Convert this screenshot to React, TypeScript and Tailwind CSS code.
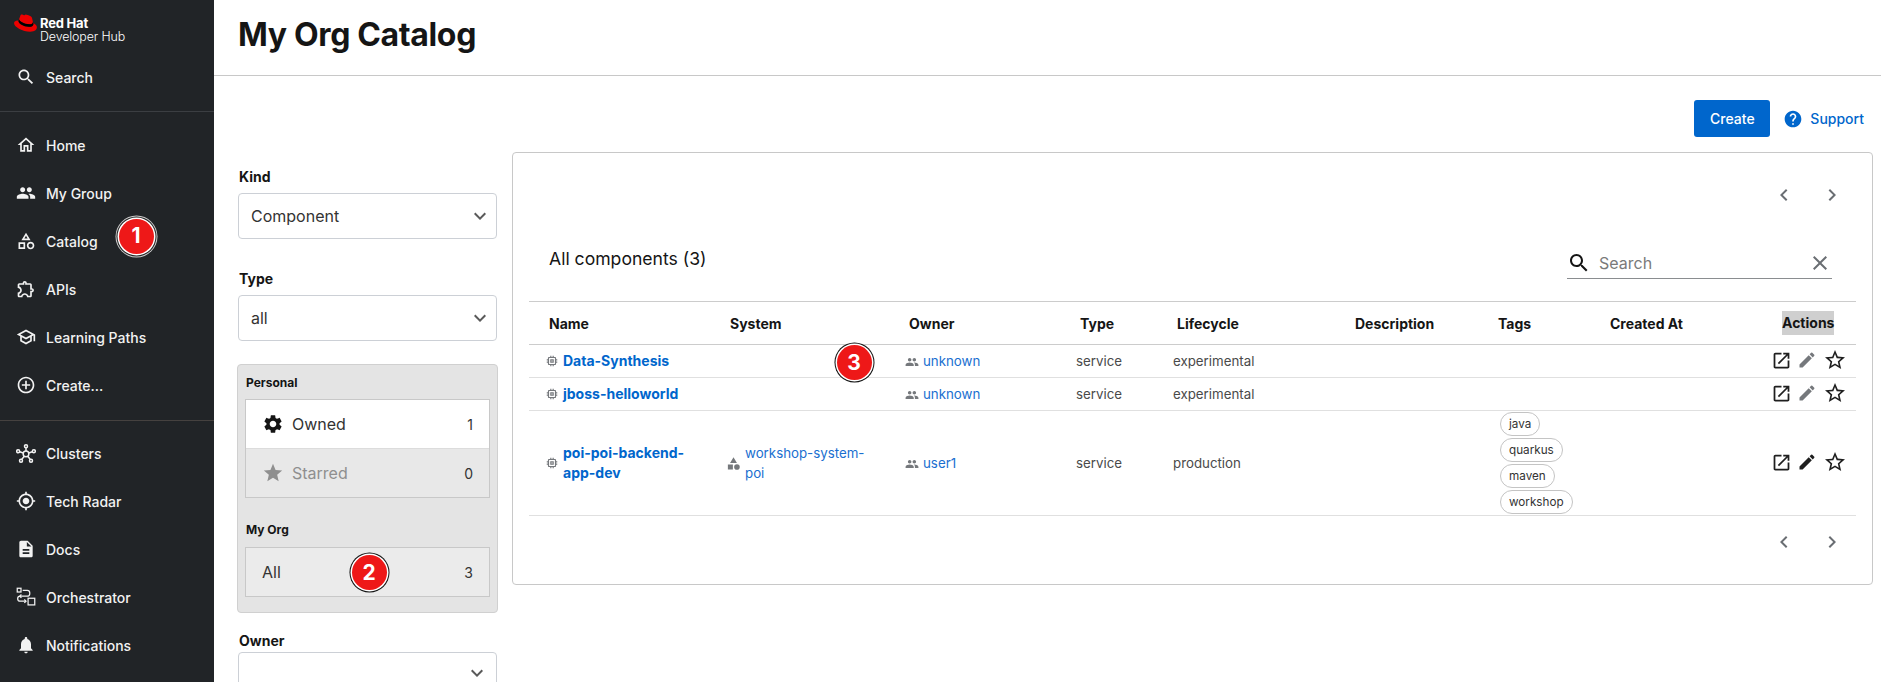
import React from "react";

const P = {
  search: "M15.5 14h-.79l-.28-.27C15.41 12.59 16 11.11 16 9.5 16 5.91 13.09 3 9.5 3S3 5.91 3 9.5 5.91 16 9.5 16c1.61 0 3.09-.59 4.23-1.57l.27.28v.79l5 4.99L20.49 19l-4.99-5zm-6 0C7.01 14 5 11.99 5 9.5S7.01 5 9.5 5 14 7.01 14 9.5 11.99 14 9.5 14z",
  home: "m12 5.69 5 4.5V18h-2v-6H9v6H7v-7.81l5-4.5M12 3 2 12h3v8h6v-6h2v6h6v-8h3L12 3z",
  people: "M16 11c1.66 0 2.99-1.34 2.99-3S17.66 5 16 5c-1.66 0-3 1.34-3 3s1.34 3 3 3zm-8 0c1.66 0 2.99-1.34 2.99-3S9.66 5 8 5C6.34 5 5 6.34 5 8s1.34 3 3 3zm0 2c-2.33 0-7 1.17-7 3.5V19h14v-2.5c0-2.33-4.67-3.5-7-3.5zm8 0c-.29 0-.62.02-.97.05 1.16.84 1.97 1.97 1.97 3.45V19h6v-2.5c0-2.33-4.67-3.5-7-3.5z",
  category: "m12 2-5.5 9h11L12 2zm0 3.84L13.93 9h-3.87L12 5.84zM17.5 13c-2.49 0-4.5 2.01-4.5 4.5s2.01 4.5 4.5 4.5 4.5-2.01 4.5-4.5-2.01-4.5-4.5-4.5zm0 7c-1.38 0-2.5-1.12-2.5-2.5s1.12-2.5 2.5-2.5 2.5 1.12 2.5 2.5-1.12 2.5-2.5 2.5zM3 21.5h8v-8H3v8zm2-6h4v4H5v-4z",
  categoryFilled: "M12 2l-5.5 9h11zM17.5 13a4.5 4.5 0 1 0 0 9 4.5 4.5 0 0 0 0-9zM3 13.5h8v8H3z",
  ext: "M10.5 4.5c.28 0 .5.22.5.5v2h6v6h2c.28 0 .5.22.5.5s-.22.5-.5.5h-2v6h-2.12c-.68-1.75-2.39-3-4.38-3s-3.7 1.25-4.38 3H4v-2.12c1.75-.68 3-2.39 3-4.38 0-1.99-1.24-3.7-2.99-4.38L4 7h6V5c0-.28.22-.5.5-.5m0-2C9.12 2.5 8 3.62 8 5H4c-1.1 0-1.99.9-1.99 2v3.8h.29c1.49 0 2.7 1.21 2.7 2.7s-1.21 2.7-2.7 2.7H2V20c0 1.1.9 2 2 2h3.8v-.3c0-1.49 1.21-2.7 2.7-2.7s2.7 1.21 2.7 2.7v.3H17c1.1 0 2-.9 2-2v-4c1.38 0 2.5-1.12 2.5-2.5S20.38 11 19 11V7c0-1.1-.9-2-2-2h-4c0-1.38-1.12-2.5-2.5-2.5z",
  school: "M12 3 1 9l4 2.18v6L12 21l7-3.82v-6l2-1.09V17h2V9L12 3zm6.82 6L12 12.72 5.18 9 12 5.28 18.82 9zM17 15.99l-5 2.73-5-2.73v-3.72L12 15l5-2.73v3.72z",
  add: "M13 7h-2v4H7v2h4v4h2v-4h4v-2h-4V7zm-1-5C6.49 2 2 6.49 2 12s4.49 10 10 10 10-4.49 10-10S17.51 2 12 2zm0 18c-4.41 0-8-3.59-8-8s3.59-8 8-8 8 3.59 8 8-3.59 8-8 8z",
  gps: "M12 8c-2.21 0-4 1.79-4 4s1.79 4 4 4 4-1.79 4-4-1.79-4-4-4zm8.94 3c-.46-4.17-3.77-7.48-7.94-7.94V1h-2v2.06C6.83 3.52 3.52 6.83 3.06 11H1v2h2.06c.46 4.17 3.77 7.48 7.94 7.94V23h2v-2.06c4.17-.46 7.48-3.77 7.94-7.94H23v-2h-2.06zM12 19c-3.87 0-7-3.13-7-7s3.13-7 7-7 7 3.13 7 7-3.13 7-7 7z",
  doc: "M14 2H6c-1.1 0-1.99.9-1.99 2L4 20c0 1.1.89 2 1.99 2H18c1.1 0 2-.9 2-2V8l-6-6zm2 16H8v-2h8v2zm0-4H8v-2h8v2zm-3-5V3.5L18.5 9H13z",
  bell: "M12 22c1.1 0 2-.9 2-2h-4c0 1.1.89 2 2 2zm6-6v-5c0-3.07-1.64-5.64-4.5-6.32V4c0-.83-.67-1.5-1.5-1.5s-1.5.67-1.5 1.5v.68C7.63 5.36 6 7.92 6 11v5l-2 2v1h16v-1l-2-2z",
  gear: "M19.14 12.94c.04-.3.06-.61.06-.94 0-.32-.02-.64-.07-.94l2.03-1.58c.18-.14.23-.41.12-.61l-1.92-3.32c-.12-.22-.37-.29-.59-.22l-2.39.96c-.5-.38-1.03-.7-1.62-.94l-.36-2.54c-.04-.24-.24-.41-.48-.41h-3.84c-.24 0-.43.17-.47.41l-.36 2.54c-.59.24-1.13.57-1.62.94l-2.39-.96c-.22-.08-.47 0-.59.22L2.74 8.87c-.12.21-.08.47.12.61l2.03 1.58c-.05.3-.09.63-.09.94s.02.64.07.94l-2.03 1.58c-.18.14-.23.41-.12.61l1.92 3.32c.12.22.37.29.59.22l2.39-.96c.5.38 1.03.7 1.62.94l.36 2.54c.05.24.24.41.48.41h3.84c.24 0 .44-.17.47-.41l.36-2.54c.59-.24 1.13-.56 1.62-.94l2.39.96c.22.08.47 0 .59-.22l1.92-3.32c.12-.22.07-.47-.12-.61l-2.01-1.58zM12 15.6c-1.98 0-3.6-1.62-3.6-3.6s1.62-3.6 3.6-3.6 3.6 1.62 3.6 3.6-1.62 3.6-3.6 3.6z",
  star: "M12 17.27 18.18 21l-1.64-7.03L22 9.24l-7.19-.61L12 2 9.19 8.63 2 9.24l5.46 4.73L5.82 21z",
  starO: "M22 9.24l-7.19-.62L12 2 9.19 8.63 2 9.24l5.46 4.73L5.82 21 12 17.27 18.18 21l-1.63-7.03L22 9.24zM12 15.4l-3.76 2.27 1-4.28-3.32-2.88 4.38-.38L12 6.1l1.71 4.04 4.38.38-3.32 2.88 1 4.28L12 15.4z",
  edit: "M3 17.25V21h3.75L17.81 9.94l-3.75-3.75L3 17.25zM20.71 7.04c.39-.39.39-1.02 0-1.41l-2.34-2.34a.9959.9959 0 0 0-1.41 0l-1.83 1.83 3.75 3.75 1.83-1.83z",
  open: "M19 19H5V5h7V3H5c-1.11 0-2 .9-2 2v14c0 1.1.89 2 2 2h14c1.1 0 2-.9 2-2v-7h-2v7zM14 3v2h3.59l-9.83 9.83 1.41 1.41L19 6.41V10h2V3h-7z",
  help: "M12 2C6.48 2 2 6.48 2 12s4.48 10 10 10 10-4.48 10-10S17.52 2 12 2zm1 17h-2v-2h2v2zm2.07-7.75-.9.92C13.45 12.9 13 13.5 13 15h-2v-.5c0-1.1.45-2.1 1.17-2.83l1.24-1.26c.37-.36.59-.86.59-1.41 0-1.1-.9-2-2-2s-2 .9-2 2H8c0-2.21 1.79-4 4-4s4 1.79 4 4c0 .88-.36 1.68-.93 2.25z",
  close: "M19 6.41 17.59 5 12 10.59 6.41 5 5 6.41 10.59 12 5 17.59 6.41 19 12 13.41 17.59 19 19 17.59 13.41 12z",
  memory: "M15 9H9v6h6V9zm-2 4h-2v-2h2v2zm8-2V9h-2V7c0-1.1-.9-2-2-2h-2V3h-2v2h-2V3H9v2H7c-1.1 0-2 .9-2 2v2H3v2h2v2H3v2h2v2c0 1.1.9 2 2 2h2v2h2v-2h2v2h2v-2h2c1.1 0 2-.9 2-2v-2h2v-2h-2v-2h2zm-4 6H7V7h10v10z",
  left: "M15.41 7.41 14 6l-6 6 6 6 1.41-1.41L10.83 12z",
  right: "M10 6 8.59 7.41 13.17 12l-4.58 4.59L10 18l6-6z",
  down: "M16.59 8.59 12 13.17 7.41 8.59 6 10l6 6 6-6z",
};

function I({ d, className }: { d: string; className: string }) {
  return (
    <svg viewBox="0 0 24 24" fill="currentColor" className={className}>
      <path d={d} />
    </svg>
  );
}

function Hub() {
  return (
    <svg viewBox="0 0 24 24" fill="none" stroke="currentColor" strokeWidth="1.8" className="w-[21px] h-[21px]">
      <circle cx="12" cy="12.5" r="3.4" />
      <circle cx="12" cy="3.2" r="1.8" />
      <circle cx="2.6" cy="9.4" r="1.8" />
      <circle cx="21.4" cy="9.4" r="1.8" />
      <circle cx="6" cy="20.6" r="1.8" />
      <circle cx="18" cy="20.6" r="1.8" />
      <path d="M12 5v4.1M4.4 10l4.4 1.5M19.6 10l-4.4 1.5M7 19l3-3.6M17 19l-3-3.6" />
    </svg>
  );
}

function Orchestrator() {
  return (
    <svg viewBox="0 0 24 24" fill="none" stroke="currentColor" strokeWidth="1.5" className="w-[20px] h-[20px]">
      <rect x="1.5" y="1.5" width="4.5" height="4.5" />
      <rect x="14.5" y="13.5" width="8" height="8" />
      <path d="M8 4h5.5a3 3 0 0 1 3 3v1a3 3 0 0 1-3 3H5a3 3 0 0 0-3 3v0a3 3 0 0 0 3 3h7" />
      <path d="M6.5 9l-2 2 2 2M10 15l2 2-2 2" />
    </svg>
  );
}

function Logo() {
  return (
    <svg viewBox="0 0 192 145" className="w-[23px] h-[18px] shrink-0">
      <path fill="#e00" d="M127.47,83.49c12.51,0,30.61-2.58,30.61-17.46a14,14,0,0,0-.31-3.42l-7.45-32.36c-1.72-7.12-3.23-10.35-15.73-16.6C124.89,8.69,103.76.5,97.51.5,91.69.5,90,8,83.06,8c-6.68,0-11.64-5.6-17.89-5.6-6,0-9.91,4.09-12.93,12.5,0,0-8.41,23.72-9.49,27.16A6.43,6.43,0,0,0,42.53,44c0,9.22,36.3,39.45,84.94,39.45M160,72.07c1.73,8.19,1.73,9.05,1.73,10.13,0,14-15.74,21.77-36.43,21.77C78.54,104,37.58,76.6,37.58,58.49a18.45,18.45,0,0,1,1.51-7.33C22.27,52,.5,55,.5,74.22c0,31.48,74.59,70.28,133.65,70.28,45.28,0,56.7-20.48,56.7-36.65,0-12.72-11-27.16-30.83-35.78" />
      <path fill="#000" d="M160,72.07c1.73,8.19,1.73,9.05,1.73,10.13,0,14-15.74,21.77-36.43,21.77C78.54,104,37.58,76.6,37.58,58.49a18.45,18.45,0,0,1,1.51-7.33l3.66-9.06A6.43,6.43,0,0,0,42.53,44c0,9.22,36.3,39.45,84.94,39.45,12.51,0,30.61-2.58,30.61-17.46a14,14,0,0,0-.31-3.42Z" />
    </svg>
  );
}

function Badge({ n, className }: { n: string; className: string }) {
  return (
    <div className={"absolute rounded-full bg-[#ee1818] text-white font-bold text-[21px] flex items-center justify-center w-[35px] h-[35px] " + className}>
      {n}
    </div>
  );
}

function NavItem({ icon, label, children }: { icon: React.ReactNode; label: string; children?: React.ReactNode }) {
  return (
    <div className="relative h-[48px] flex items-center pl-[16px] text-[#f2f2f2]">
      <div className="w-[20px] h-[24px] flex items-center justify-center mr-[10px]">{icon}</div>
      <span className="text-[14px] font-medium">{label}</span>
      {children}
    </div>
  );
}

const nav = "w-[20px] h-[20px]";

function FilterSelect({ label, value, className, boxClass, labelClass }: { label: string; value?: string; className: string; boxClass?: string; labelClass?: string }) {
  return (
    <div className={className}>
      <div className={"text-[14px] font-bold text-[#151515] leading-[17px] pl-[1px] " + (labelClass ?? "mb-[8px]")}>{label}</div>
      <div className={"border border-[#ccd0d6] rounded-[4px] flex items-center justify-between pl-[12px] bg-white " + (boxClass ?? "h-[46px] pr-[4px]")}>
        <span className="text-[16px] text-[#333]">{value}</span>
        <I d={P.down} className="w-[24px] h-[24px] text-[#5a5a5a]" />
      </div>
    </div>
  );
}

function Pager({ className }: { className: string }) {
  return (
    <div className={"flex justify-end gap-[24px] pr-[12px] text-[#6a6e73] " + className}>
      <I d={P.left} className="w-[24px] h-[24px]" />
      <I d={P.right} className="w-[24px] h-[24px]" />
    </div>
  );
}

const th = "text-left font-bold text-[14px] text-[#151515] pl-[20px] border-b border-[#cccccc]";
const td = "text-[13.3px] text-[#4a4a4a] pl-[16px] border-b border-[#e0e0e0]";
const link = "text-[#1a6fd0]";
const nameLink = "text-[#0066cc] font-bold text-[14px]";

function Actions({ editOff }: { editOff?: boolean }) {
  return (
    <div className="flex items-center -ml-[7px] mb-[2px]">
      <I d={P.open} className="w-[21px] h-[21px] text-[#1f1f1f]" />
      <I d={P.edit} className={"w-[20px] h-[20px] ml-[5px] " + (editOff ? "text-[#75787c]" : "text-[#1f1f1f]")} />
      <I d={P.starO} className="w-[24px] h-[24px] text-[#1f1f1f] ml-[6px]" />
    </div>
  );
}

function Row({ name, system, owner, type, life, tags, h, editOff, children }: { name: React.ReactNode; system?: React.ReactNode; owner: string; type: string; life: string; tags?: string[]; h: string; editOff?: boolean; children?: React.ReactNode }) {
  return (
    <tr className={h}>
      <td className={td}>
        <div className="flex items-center gap-[4px]">
          <I d={P.memory} className="w-[14px] h-[14px] text-[#75787c] shrink-0" />
          <span className={nameLink + " leading-[20px]"}>{name}</span>
        </div>
      </td>
      <td className={td}>
        <div className="relative">
          {system && (
            <div className="flex items-center gap-[4px]">
              <I d={P.categoryFilled} className="w-[15px] h-[15px] text-[#75787c] shrink-0" />
              <span className={link + " leading-[20px] w-[125px]"}>{system}</span>
            </div>
          )}
          {children}
        </div>
      </td>
      <td className={td + " pt-[2px]"}>
        <div className="flex items-center gap-[4px]">
          <I d={P.people} className="w-[14px] h-[14px] text-[#75787c]" />
          <span className={link}>{owner}</span>
        </div>
      </td>
      <td className={td + " pt-[2px]"}>{type}</td>
      <td className={td + " pt-[2px]"}>{life}</td>
      <td className={td}></td>
      <td className={td + " pl-[22px]"}>
        {tags && (
          <div className="flex flex-col items-start gap-[2px]">
            {tags.map((t) => (
              <span key={t} className="h-[24px] leading-[22px] border border-[#c4c4c4] rounded-full px-[8px] text-[11.7px] text-[#333]">{t}</span>
            ))}
          </div>
        )}
      </td>
      <td className={td}></td>
      <td className={td}><Actions editOff={editOff} /></td>
    </tr>
  );
}

export default function App() {
  return (
    <div className="flex h-[682px] overflow-hidden bg-white font-[Inter,sans-serif]">
      <aside className="w-[214px] shrink-0 bg-[#212427] text-white">
        <div className="h-[53px] pt-[14px] pl-[14px] flex items-start gap-[3px]">
          <Logo />
          <div className="text-[12.4px] leading-[13px] pt-[3px] text-white">
            <div className="font-bold text-[13px] tracking-[-0.2px]">Red Hat</div>
            <div className="font-light tracking-[-0.1px]">Developer Hub</div>
          </div>
        </div>
        <NavItem icon={<I d={P.search} className={nav} />} label="Search" />
        <div className="mt-[10px] h-px bg-[#3b3e42]" />
        <div className="mt-[9px]">
          <NavItem icon={<I d={P.home} className={nav} />} label="Home" />
          <NavItem icon={<I d={P.people} className={nav} />} label="My Group" />
          <NavItem icon={<I d={P.category} className={nav} />} label="Catalog">
            <Badge n="1" className="left-[118.5px] top-[1.5px] shadow-[0_0_0_1.5px_#ffffff,0_0_0_2.5px_#222222,0_0_0_3.5px_#cccccc]" />
          </NavItem>
          <NavItem icon={<I d={P.ext} className={nav} />} label="APIs" />
          <NavItem icon={<I d={P.school} className={nav} />} label="Learning Paths" />
          <NavItem icon={<I d={P.add} className={nav} />} label="Create..." />
        </div>
        <div className="mt-[11px] h-px bg-[#45413f]" />
        <div className="mt-[8px]">
          <NavItem icon={<Hub />} label="Clusters" />
          <NavItem icon={<I d={P.gps} className={nav} />} label="Tech Radar" />
          <NavItem icon={<I d={P.doc} className={nav} />} label="Docs" />
          <NavItem icon={<Orchestrator />} label="Orchestrator" />
          <NavItem icon={<I d={P.bell} className={nav} />} label="Notifications" />
        </div>
      </aside>

      <main className="flex-1 min-w-0">
        <header className="h-[76px] border-b border-[#c8c8c8] pl-[24px] flex items-center pb-[6px]">
          <h1 className="text-[32px] font-bold text-[#151515] tracking-[-0.35px]">My Org Catalog</h1>
        </header>

        <div className="pl-[24px] pr-[8px] pt-[24px]">
          <div className="flex justify-end items-center h-[37px] pr-[9px]">
            <div className="w-[76px] h-[37px] bg-[#0066cc] rounded-[3px] text-white text-[14px] font-medium flex items-center justify-center">Create</div>
            <div className="flex items-center ml-[13px] text-[#0066cc] text-[14px] font-medium">
              <I d={P.help} className="w-[20px] h-[20px] mr-[7px]" />
              <span>Support</span>
            </div>
          </div>

          <div className="flex mt-[15px]">
            <div className="w-[259px] shrink-0 mr-[15px]">
              <FilterSelect label="Kind" value="Component" className="pt-[16px]" />
              <FilterSelect label="Type" value="all" className="mt-[31px]" />
              <div className="mt-[23px] -ml-[1px] -mr-[1px] bg-[#e4e4e4] border border-[#d0d0d0] rounded-[4px] px-[7px] pt-[10px] pb-[15px]">
                <div className="text-[12px] font-bold text-[#151515] leading-[16px] pl-[1px] mb-[8px]">Personal</div>
                <div className="border border-[#c8c8c8]">
                  <div className="h-[48px] bg-white flex items-center pl-[16px] pr-[16px]">
                    <I d={P.gear} className="w-[22px] h-[22px] text-[#151515] mr-[8px]" />
                    <span className="flex-1 text-[16px] text-[#333]">Owned</span>
                    <span className="text-[14px] text-[#333]">1</span>
                  </div>
                  <div className="h-[49px] bg-[#e8e8e8] border-t border-[#dcdcdc] flex items-center pl-[16px] pr-[16px]">
                    <I d={P.star} className="w-[22px] h-[22px] text-[#8f8f8f] mr-[8px]" />
                    <span className="flex-1 text-[16px] text-[#8f8f8f]">Starred</span>
                    <span className="text-[14px] text-[#333]">0</span>
                  </div>
                </div>
                <div className="text-[12px] font-bold text-[#151515] leading-[16px] pl-[1px] mt-[24px] mb-[9px]">My Org</div>
                <div className="relative h-[50px] bg-[#ebebeb] border border-[#c8c8c8] flex items-center pl-[16px] pr-[16px]">
                  <span className="flex-1 text-[16px] text-[#333]">All</span>
                  <span className="text-[14px] text-[#333]">3</span>
                  <Badge n="2" className="left-[105.5px] top-[7px] shadow-[0_0_0_1.5px_#ffffff,0_0_0_2.5px_#111111]" />
                </div>
              </div>
              <FilterSelect label="Owner" className="mt-[19px]" labelClass="mb-[3px]" boxClass="h-[42px] pr-[7px]" />
            </div>

            <section className="flex-1 min-w-0 h-[433px] border border-[#c8c8c8] rounded-[4px] px-[16px] bg-white">
              <Pager className="mt-[30px]" />
              <div className="flex justify-between mt-[32px] h-[40px]">
                <h2 className="text-[17.6px] text-[#151515] pl-[20px] pt-[8px] leading-[24px]">All components (3)</h2>
                <div className="w-[265px] h-[40px] border-b border-[#8a8d90] flex items-center pt-[8px] mr-[24px] text-[#151515]">
                  <I d={P.search} className="w-[24px] h-[24px] shrink-0" />
                  <span className="flex-1 pl-[8px] text-[16px] text-[#7a7a7a]">Search</span>
                  <I d={P.close} className="w-[24px] h-[24px] text-[#6a6e73]" />
                </div>
              </div>
              <table className="table-fixed border-collapse w-[1327px] mt-[22px] border-t border-[#cccccc]">
                <colgroup>
                  <col className="w-[181px]" />
                  <col className="w-[179px]" />
                  <col className="w-[171px]" />
                  <col className="w-[97px]" />
                  <col className="w-[178px]" />
                  <col className="w-[143px]" />
                  <col className="w-[112px]" />
                  <col className="w-[172px]" />
                  <col className="w-[94px]" />
                </colgroup>
                <thead>
                  <tr className="h-[43px]">
                    <th className={th}>Name</th>
                    <th className={th}>System</th>
                    <th className={th}>Owner</th>
                    <th className={th}>Type</th>
                    <th className={th}>Lifecycle</th>
                    <th className={th}>Description</th>
                    <th className={th}>Tags</th>
                    <th className={th}>Created At</th>
                    <th className={th}><span className="bg-[#cfcfcf] inline-block leading-[24px]">Actions</span></th>
                  </tr>
                </thead>
                <tbody>
                  <Row h="h-[33px]" name="Data-Synthesis" owner="unknown" type="service" life="experimental" editOff>
                    <Badge n="3" className="left-[110.5px] -top-[16px] shadow-[0_0_0_1.5px_#ffffff,0_0_0_2.5px_#111111]" />
                  </Row>
                  <Row h="h-[33px]" name="jboss-helloworld" owner="unknown" type="service" life="experimental" editOff />
                  <Row h="h-[105px]" name="poi-poi-backend-app-dev" system="workshop-system-poi" owner="user1" type="service" life="production" tags={["java", "quarkus", "maven", "workshop"]} />
                </tbody>
              </table>
              <Pager className="mt-[14px]" />
            </section>
          </div>
        </div>
      </main>
    </div>
  );
}
